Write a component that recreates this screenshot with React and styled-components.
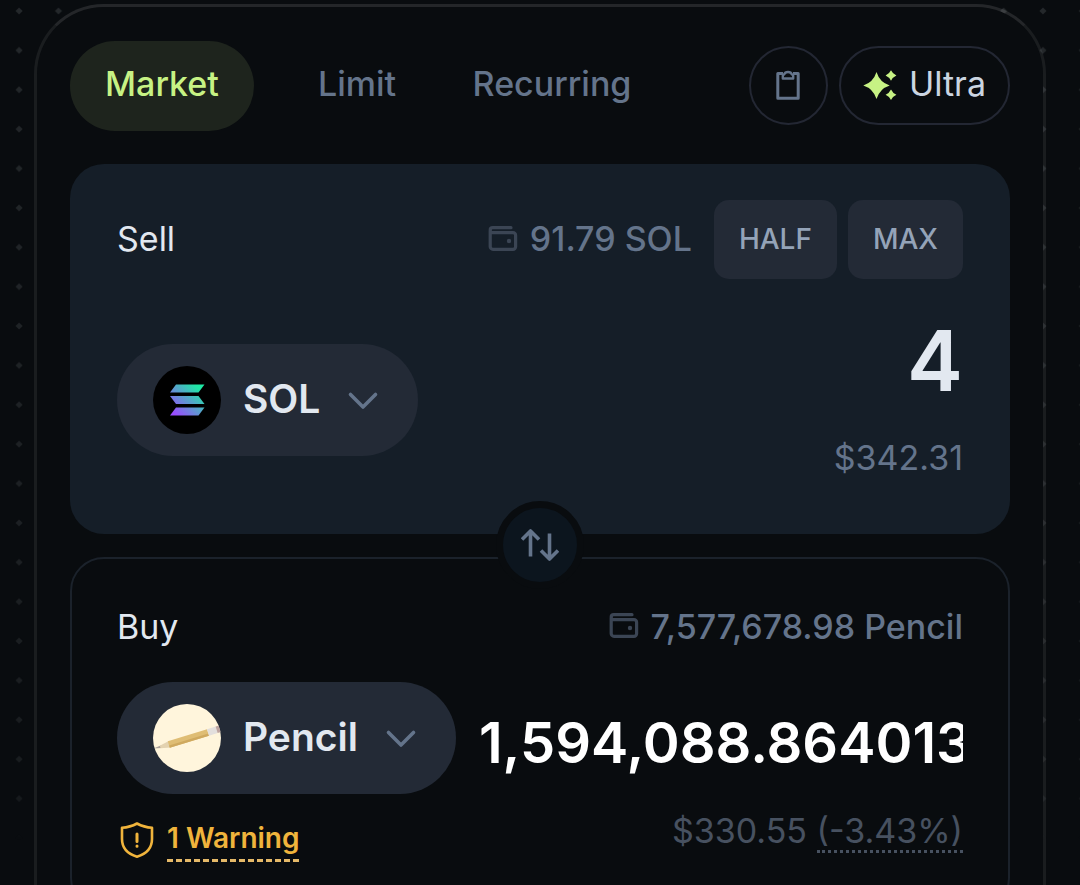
import React, {useState} from 'react'
import styled, {createGlobalStyle} from 'styled-components'

const WalletIcon = () => (
  <svg width='30' height='28' viewBox='0 0 30 28' fill='none' stroke='currentColor' strokeWidth='3.200' strokeLinecap='round' strokeLinejoin='round'>
    <path d='M2.200 6V21.500a2.800 2.800 0 0 0 2.800 2.800h20a2.600 2.600 0 0 0 2.600-2.600V10.300a2.600 2.600 0 0 0-2.600-2.600H4.700a2.500 2.500 0 0 1-2.500-2.500A2.500 2.500 0 0 1 4.700 2.700H23' />
    <circle cx='21' cy='16' r='2.200' fill='currentColor' stroke='none' />
  </svg>
)

const ClipboardIcon = () => (
  <svg width='26' height='32' viewBox='0 0 26 32' fill='none' stroke='currentColor' strokeWidth='3' strokeLinejoin='round'>
    <path d='M8 4.500H2.800v24.700h20.400V4.500H18' />
    <path d='M7.800 9.500V6.600q0-1 1.200-1.100a4.200 3.700 0 0 1 8 0q1.200.1 1.200 1.100v2.900z' strokeWidth='2.400' />
  </svg>
)

const SparklesIcon = () => (
  <svg width='34' height='30' viewBox='0 0 34 30' fill='currentColor'>
    <path d='M13.500 2Q16.700 12.300 26.700 15.500Q16.700 18.700 13.500 29Q10.300 18.700 .3 15.500Q10.300 12.300 13.500 2z' />
    <path d='M28 .2Q29.800 3.900 33.400 5.500Q29.800 7.100 28 10.800Q26.200 7.100 22.600 5.500Q26.200 3.900 28 .2z' />
    <path d='M28 19.500Q29.800 23.200 33.400 24.800Q29.800 26.400 28 30Q26.200 26.400 22.600 24.800Q26.200 23.200 28 19.500z' />
  </svg>
)

const ChevronIcon = () => (
  <svg width='40' height='40' viewBox='0 0 40 40' fill='none' stroke='currentColor' strokeWidth='3.600' strokeLinecap='round' strokeLinejoin='round'>
    <path d='M8.500 14.500l12.500 12.500 12.500-12.500' />
  </svg>
)

const SwapIcon = () => (
  <svg width='38' height='34' viewBox='0 0 38 34' fill='none' stroke='currentColor' strokeWidth='3.600' strokeLinejoin='round'>
    <path d='M9.500 28.500V3M1 11.500L9.500 3l8.500 8.500' />
    <path d='M28.500 5.500v25.500M20 22.500l8.500 8.500L37 22.500' />
  </svg>
)

const ShieldIcon = () => (
  <svg width='34' height='36' viewBox='0 0 34 36' fill='none' stroke='currentColor' strokeWidth='2.600' strokeLinecap='round' strokeLinejoin='round'>
    <path d='M17 1.500C21.500 4 27 5.500 32 5.800V17c0 9-6 15-15 17.700C8 32 2 26 2 17V5.800C7 5.500 12.500 4 17 1.500z' />
    <path d='M17 12v7.500M17 24v.3' strokeWidth='3' />
  </svg>
)

const SolanaLogo = () => (
  <svg width='68' height='68' viewBox='0 0 68 68'>
    <defs>
      <linearGradient id='solana' x1='20' y1='52' x2='50' y2='20' gradientUnits='userSpaceOnUse'>
        <stop offset='.1' stopColor='#9a4dff' />
        <stop offset='.5' stopColor='#5d9ad0' />
        <stop offset='.9' stopColor='#1fe8a5' />
      </linearGradient>
    </defs>
    <circle cx='34' cy='34' r='34' />
    <g fill='url(#solana)'>
      <path d='M23 18.500h28.500L45.500 26.500H17z' />
      <path d='M17 30h28.500L51.500 38H23z' />
      <path d='M23 41.500h28.500L45.500 49.500H17z' />
    </g>
  </svg>
)

const PencilLogo = () => (
  <svg width='68' height='68' viewBox='0 0 68 68'>
    <defs>
      <clipPath id='coin'>
        <circle cx='34' cy='34' r='34' />
      </clipPath>
    </defs>
    <g clipPath='url(#coin)'>
      <path fill='#fff5dc' d='M0 0h68v68H0z' />
      <g transform='rotate(-17 34 35)'>
        <path fill='#a9a09a' d='M-1 34.300l8-.7v2.600z' />
        <path fill='#e3d2b0' d='M6 33.500l10-2v6.800L6 36.200z' />
        <path fill='#dfbd74' d='M15 31.500h41v6.800H15z' />
        <path fill='#cfa95f' d='M15 36h41v2.300H15z' />
        <path fill='#e3dfdd' d='M56 31.500h9v6.800h-9z' />
        <path fill='#bda3a0' d='M65 31.500h6v6.800h-6z' />
      </g>
    </g>
  </svg>
)

const Dots = () => (
  <DotGrid aria-hidden='true'>
    <defs>
      <pattern id='dots' x='-.6' y='-8.700' width='39.380' height='39.380' patternUnits='userSpaceOnUse'>
        <path fill='#24282b' d='M19.700 16.200l3.500 3.500-3.500 3.500-3.500-3.500z' />
      </pattern>
    </defs>
    <rect width='100%' height='100%' fill='url(#dots)' />
  </DotGrid>
)

const tabs = ['Market', 'Limit', 'Recurring']

export default function App () {
  const [tab, setTab] = useState('Market')
  const [amount, setAmount] = useState('4')

  return (
    <Page>
      <GlobalStyle />
      <Dots />
      <Panel>
        <Toolbar>
          <Tabs>
            {tabs.map(name => (
              <Tab key={name} $active={name === tab} onClick={() => setTab(name)}>
                {name}
              </Tab>
            ))}
          </Tabs>
          <Actions>
            <RoundButton aria-label='Paste'>
              <ClipboardIcon />
            </RoundButton>
            <ModeButton>
              <SparklesIcon />
              <ButtonText>Ultra</ButtonText>
            </ModeButton>
          </Actions>
        </Toolbar>

        <SellCard>
          <CardHeader>
            <Label htmlFor='sell'>Sell</Label>
            <Balance>
              <WalletIcon />
              <span>91.79 SOL</span>
            </Balance>
            <Shortcuts>
              <Shortcut>HALF</Shortcut>
              <Shortcut>MAX</Shortcut>
            </Shortcuts>
          </CardHeader>
          <CardBody $center>
            <TokenButton>
              <SolanaLogo />
              <ButtonText>SOL</ButtonText>
              <ChevronIcon />
            </TokenButton>
            <AmountColumn $gap={24}>
              <Amount id='sell' $size={84} value={amount} onChange={e => setAmount(e.target.value)} />
              <Value>$342.31</Value>
            </AmountColumn>
          </CardBody>
          <SwapButton aria-label='Swap tokens'>
            <SwapIcon />
          </SwapButton>
        </SellCard>

        <BuyCard>
          <CardHeader>
            <Label htmlFor='buy'>Buy</Label>
            <Balance>
              <WalletIcon />
              <span>7,577,678.98 Pencil</span>
            </Balance>
          </CardHeader>
          <CardBody>
            <TokenColumn>
              <TokenButton>
                <PencilLogo />
                <ButtonText>Pencil</ButtonText>
                <ChevronIcon />
              </TokenButton>
              <Warning>
                <ShieldIcon />
                <WarningText>1 Warning</WarningText>
              </Warning>
            </TokenColumn>
            <AmountColumn $top={16} $gap={14}>
              <Amount id='buy' $size={56} readOnly value='1,594,088.864013' />
              <Value $dim>
                $330.55 <Impact>(-3.43%)</Impact>
              </Value>
            </AmountColumn>
          </CardBody>
        </BuyCard>
      </Panel>
    </Page>
  )
}

const GlobalStyle = createGlobalStyle`
  html {
    scrollbar-width: none;
    background: #090c0f;
  }

  body {
    margin: 0;
    font-family: Inter, 'Liberation Sans', sans-serif;
  }

  * {
    box-sizing: border-box;
  }

  button, input {
    margin: 0;
    padding: 0;
    border: 0;
    background: none;
    font: inherit;
    color: inherit;
  }

  button {
    cursor: pointer;
  }

  svg {
    display: block;
    flex: none;
  }
`

const Page = styled.main`
  position: relative;
  padding: 4px 34px 0;
  color: #e2e8f0;
  font-size: 34px;
`

const DotGrid = styled.svg`
  position: absolute;
  top: 0;
  left: 0;
  width: 100%;
  height: 100%;
  mask-image: linear-gradient(#000, rgba(0, 0, 0, 0.6) 790px, transparent 840px);
`

const Panel = styled.section`
  position: relative;
  padding: 34px 33px 48px;
  border: 3px solid rgba(255, 255, 255, 0.11);
  border-radius: 70px;
  background: #090c0f padding-box;
  border-left-color: rgba(255, 255, 255, 0.07);
  border-right-color: rgba(255, 255, 255, 0.07);
`

const Toolbar = styled.div`
  display: flex;
  align-items: center;
  justify-content: space-between;
  margin-bottom: 33px;
`

const Tabs = styled.div`
  display: flex;
  gap: 11px;
`

const Tab = styled.button`
  width: 184px;
  height: 90px;
  padding-bottom: 5px;
  border-radius: 45px;
  font-weight: 500;
  color: ${props => props.$active ? '#c7f284' : '#64748b'};
  background: ${props => props.$active ? '#1e241d' : 'transparent'};
`

const Actions = styled.div`
  display: flex;
  gap: 11px;
  padding-bottom: 2px;
`

const RoundButton = styled.button`
  display: flex;
  align-items: center;
  justify-content: center;
  width: 79px;
  height: 79px;
  border: 2px solid #232733;
  border-radius: 40px;
  color: #64748b;
`

const ModeButton = styled(RoundButton)`
  gap: 12px;
  width: auto;
  padding: 0 22px;
  color: #cbd5e1;

  svg {
    color: #c7f284;
  }
`

const ButtonText = styled.span`
  padding-bottom: 3px;
`

const Card = styled.div`
  position: relative;
  border-radius: 34px;
`

const SellCard = styled(Card)`
  margin-bottom: 23px;
  padding: 36px 47px 49px;
  background: #151e28;
`

const BuyCard = styled(Card)`
  padding: 44px 45px 48px;
  border: 2px solid #1b222b;
`

const CardHeader = styled.div`
  display: flex;
  align-items: center;
  min-height: 48px;
`

const Label = styled.label`
  flex: 1;
  padding-bottom: 2px;
`

const Balance = styled.div`
  display: flex;
  align-items: center;
  gap: 12px;
  padding-bottom: 2px;
  font-weight: 500;
  color: #64748b;

  svg {
    color: #3b4554;
  }
`

const Shortcuts = styled.div`
  display: flex;
  gap: 11px;
  margin-left: 22px;
`

const Shortcut = styled.button`
  height: 79px;
  padding: 0 25px 2px;
  border-radius: 15px;
  font-size: 28px;
  font-weight: 500;
  color: #94a3b8;
  background: #232a36;
`

const CardBody = styled.div`
  display: flex;
  align-items: ${props => props.$center ? 'center' : 'flex-start'};
  gap: 23px;
  margin-top: ${props => props.$center ? '36px' : '31px'};
`

const TokenColumn = styled.div`
  display: flex;
  flex-direction: column;
  gap: 24px;
`

const TokenButton = styled.button`
  display: flex;
  align-items: center;
  gap: 22px;
  height: 112px;
  padding: 0 36px;
  border-radius: 56px;
  font-size: 39px;
  font-weight: 600;
  color: #e2e8f0;
  background: #232a36;

  svg:last-child {
    color: #64748b;
  }
`

const AmountColumn = styled.div`
  display: flex;
  flex: 1;
  flex-direction: column;
  gap: ${props => props.$gap}px;
  min-width: 0;
  padding-top: ${props => props.$top || 0}px;
`

const Amount = styled.input`
  width: 100%;
  height: 92px;
  padding-bottom: 2px;
  font-size: ${props => props.$size}px;
  font-weight: 600;
  text-align: right;
  outline: none;
  color: ${props => props.readOnly ? '#fff' : '#e2e8f0'};
`

const Value = styled.div`
  line-height: 54px;
  text-align: right;
  color: ${props => props.$dim ? '#475160' : '#64748b'};
`

const Impact = styled.span`
  display: inline-block;
  line-height: 38px;
  border-bottom: 3px dotted #475160;
`

const Warning = styled.div`
  display: flex;
  align-items: center;
  gap: 13px;
  padding-left: 3px;
  color: #f0b43c;
`

const WarningText = styled.button`
  border-bottom: 3px dashed #e5b968;
  font-size: 28px;
  font-weight: 600;
  line-height: 41px;
`

const SwapButton = styled.button`
  position: absolute;
  z-index: 1;
  bottom: -55px;
  left: 50%;
  display: flex;
  align-items: center;
  justify-content: center;
  width: 88px;
  height: 88px;
  border: 7px solid #090c0f;
  border-radius: 50%;
  transform: translateX(-50%);
  color: #64748b;
  background: #0c151e;
`
